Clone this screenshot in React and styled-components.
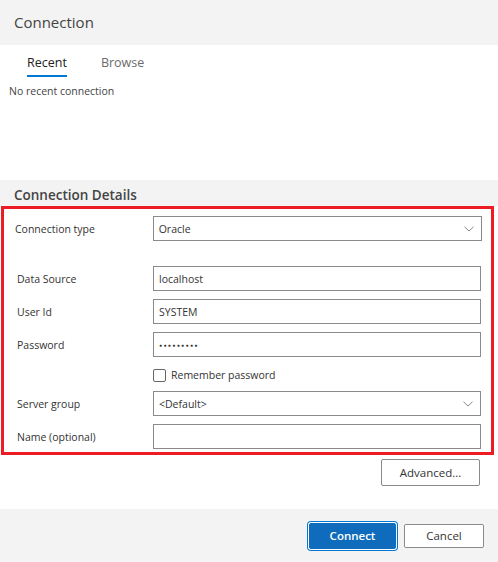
import React from 'react';
import styled, { createGlobalStyle } from 'styled-components';

const GlobalStyle = createGlobalStyle`
  html, body {
    margin: 0;
    padding: 0;
    background: #ffffff;
  }
  body {
    font-family: 'Open Sans', 'Noto Sans', sans-serif;
    color: #333333;
  }
`;

const Dialog = styled.div`
  width: 498px;
  height: 562px;
  display: flex;
  flex-direction: column;
  background: #ffffff;
`;

const TitleBar = styled.div`
  height: 45px;
  display: flex;
  align-items: center;
  padding: 0 0 2px 14px;
  box-sizing: border-box;
  background: #f3f3f3;
  font-size: 15px;
  color: #444444;
`;

const Tabs = styled.div`
  display: flex;
  gap: 34px;
  padding: 8px 0 0 27px;
  height: 24px;
`;

const Tab = styled.div`
  font-size: 12.5px;
  line-height: 20px;
  height: 24px;
  color: ${(p) => (p.$active ? '#222222' : '#6b6b6b')};
  border-bottom: 2px solid ${(p) => (p.$active ? '#0078d4' : 'transparent')};
  box-sizing: border-box;
`;

const RecentPanel = styled.div`
  height: 103px;
  padding: 7px 0 0 9px;
  box-sizing: border-box;
  font-size: 10.5px;
  color: #444444;
`;

const SectionHeader = styled.div`
  height: 26px;
  display: flex;
  align-items: center;
  padding: 3px 0 0 14px;
  box-sizing: border-box;
  background: #f3f3f3;
  font-size: 13.5px;
  font-weight: 600;
  color: #444444;
`;

const FormBox = styled.div`
  margin: 0 4px 0 1px;
  border: 3px solid #ed1c24;
  padding: 7px 9px 2px 11px;
  display: flex;
  flex-direction: column;
  height: 249px;
  box-sizing: border-box;
`;

const Row = styled.div`
  display: flex;
  align-items: center;
  margin-top: ${(p) => p.$gap || 0}px;
  height: ${(p) => p.$h || 25}px;
`;

const Label = styled.div`
  width: ${(p) => (p.$shift ? 136 : 138)}px;
  padding-left: ${(p) => (p.$shift ? 2 : 0)}px;
  font-size: 10.5px;
  color: #333333;
`;

const Field = styled.div`
  box-sizing: border-box;
  height: 25px;
  width: ${(p) => p.$w || 328}px;
  border: 1px solid #8a8a8a;
  display: flex;
  align-items: center;
  justify-content: space-between;
  padding: 0 7px 0 5px;
  font-size: 10.5px;
  color: #333333;
  background: #ffffff;
`;

const Dots = styled.span`
  font-size: 5px;
  letter-spacing: 1.4px;
  color: #333333;
`;

const Check = styled.label`
  display: flex;
  align-items: center;
  gap: 5px;
  font-size: 10.5px;
  color: #333333;
`;

const Box = styled.span`
  width: 13px;
  height: 13px;
  box-sizing: border-box;
  border: 1px solid #666666;
  border-radius: 2px;
  background: #ffffff;
`;

const AdvancedRow = styled.div`
  display: flex;
  justify-content: flex-end;
  padding: 4px 18px 0 0;
  height: 54px;
  box-sizing: border-box;
`;

const Button = styled.button`
  box-sizing: border-box;
  height: ${(p) => p.$h || 24}px;
  width: ${(p) => p.$w}px;
  border: 1px solid ${(p) => (p.$primary ? '#0f6cbd' : '#8a8a8a')};
  border-radius: 2px;
  background: ${(p) => (p.$primary ? '#0f6cbd' : '#ffffff')};
  color: ${(p) => (p.$primary ? '#ffffff' : '#333333')};
  font-family: inherit;
  font-size: 11.5px;
  font-weight: ${(p) => (p.$primary ? 600 : 400)};
  padding: 0;
  box-shadow: ${(p) => (p.$primary ? '0 0 0 1px #ffffff, 0 0 0 2px #0078d4' : 'none')};
`;

const Footer = styled.div`
  flex: 1;
  background: #f3f3f3;
  display: flex;
  justify-content: flex-end;
  align-items: center;
  gap: 8px;
  padding-right: 14px;
`;

const Chevron = () => (
  <svg width="10" height="6" viewBox="0 0 10 6">
    <path d="M0.5 0.8 L5 5 L9.5 0.8" fill="none" stroke="#7a7a7a" strokeWidth="0.9" />
  </svg>
);

export default function App() {
  return (
    <>
      <GlobalStyle />
      <Dialog>
        <TitleBar>Connection</TitleBar>
        <Tabs>
          <Tab $active>Recent</Tab>
          <Tab>Browse</Tab>
        </Tabs>
        <RecentPanel>No recent connection</RecentPanel>
        <SectionHeader>Connection Details</SectionHeader>
        <FormBox>
          <Row>
            <Label>Connection type</Label>
            <Field $w={330}>
              Oracle
              <Chevron />
            </Field>
          </Row>
          <Row $gap={25}>
            <Label $shift>Data Source</Label>
            <Field>localhost</Field>
          </Row>
          <Row $gap={8}>
            <Label $shift>User Id</Label>
            <Field>SYSTEM</Field>
          </Row>
          <Row $gap={8}>
            <Label $shift>Password</Label>
            <Field>
              <Dots>●●●●●●●●●</Dots>
            </Field>
          </Row>
          <Row $gap={10} $h={16}>
            <Label />
            <Check>
              <Box />
              Remember password
            </Check>
          </Row>
          <Row $gap={8}>
            <Label $shift>Server group</Label>
            <Field>
              &lt;Default&gt;
              <Chevron />
            </Field>
          </Row>
          <Row $gap={8}>
            <Label $shift>Name (optional)</Label>
            <Field />
          </Row>
        </FormBox>
        <AdvancedRow>
          <Button $w={99} $h={27}>Advanced...</Button>
        </AdvancedRow>
        <Footer>
          <Button $primary $w={87} $h={26}>Connect</Button>
          <Button $w={80}>Cancel</Button>
        </Footer>
      </Dialog>
    </>
  );
}
